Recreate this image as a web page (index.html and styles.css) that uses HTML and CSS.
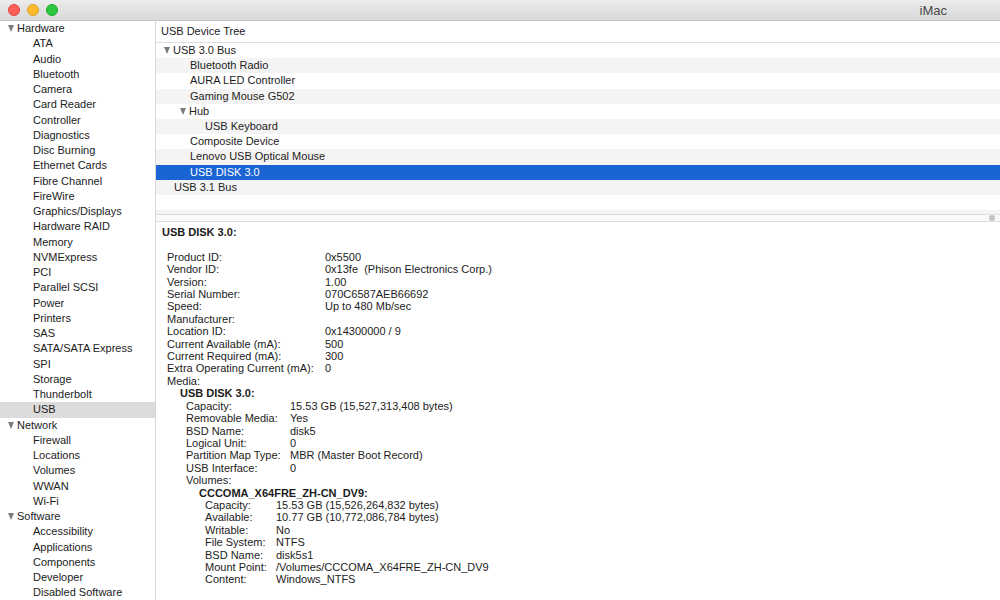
FILE: index.html
```html
<!DOCTYPE html>
<html lang="en">
<head>
    <meta charset="UTF-8">
    <title>System Information</title>
    <link rel="stylesheet" href="styles.css">
</head>
<body>

<div class="window">
    <div class="titlebar">
        <div class="lights">
            <span class="light red"></span>
            <span class="light yellow"></span>
            <span class="light green"></span>
        </div>
        <div class="title">iMac</div>
    </div>

    <div class="main">
        <ul class="sidebar">
            <li class="group"><span class="tri"></span>Hardware</li>
            <li>ATA</li>
            <li>Audio</li>
            <li>Bluetooth</li>
            <li>Camera</li>
            <li>Card Reader</li>
            <li>Controller</li>
            <li>Diagnostics</li>
            <li>Disc Burning</li>
            <li>Ethernet Cards</li>
            <li>Fibre Channel</li>
            <li>FireWire</li>
            <li>Graphics/Displays</li>
            <li>Hardware RAID</li>
            <li>Memory</li>
            <li>NVMExpress</li>
            <li>PCI</li>
            <li>Parallel SCSI</li>
            <li>Power</li>
            <li>Printers</li>
            <li>SAS</li>
            <li>SATA/SATA Express</li>
            <li>SPI</li>
            <li>Storage</li>
            <li>Thunderbolt</li>
            <li class="current">USB</li>
            <li class="group"><span class="tri"></span>Network</li>
            <li>Firewall</li>
            <li>Locations</li>
            <li>Volumes</li>
            <li>WWAN</li>
            <li>Wi-Fi</li>
            <li class="group"><span class="tri"></span>Software</li>
            <li>Accessibility</li>
            <li>Applications</li>
            <li>Components</li>
            <li>Developer</li>
            <li>Disabled Software</li>
        </ul>

        <div class="content">
            <div class="tree-head">USB Device Tree</div>
            <ul class="tree">
                <li class="lv0"><span class="tri"></span>USB 3.0 Bus</li>
                <li class="lv1">Bluetooth Radio</li>
                <li class="lv1">AURA LED Controller</li>
                <li class="lv1">Gaming Mouse G502</li>
                <li class="lv1 open"><span class="tri"></span>Hub</li>
                <li class="lv2">USB Keyboard</li>
                <li class="lv1">Composite Device</li>
                <li class="lv1">Lenovo USB Optical Mouse</li>
                <li class="lv1 selected">USB DISK 3.0</li>
                <li class="lv0">USB 3.1 Bus</li>
                <li></li>
                <li class="cut"></li>
            </ul>

            <div class="splitter"><span class="grip"></span></div>

            <div class="detail">
                <div class="heading">USB DISK 3.0:</div>
                <div class="blank"></div>

                <div class="props level1">
                    <span>Product ID:</span><span>0x5500</span>
                    <span>Vendor ID:</span><span>0x13fe&nbsp; (Phison Electronics Corp.)</span>
                    <span>Version:</span><span>1.00</span>
                    <span>Serial Number:</span><span>070C6587AEB66692</span>
                    <span>Speed:</span><span>Up to 480 Mb/sec</span>
                    <span>Manufacturer:</span><span></span>
                    <span>Location ID:</span><span>0x14300000 / 9</span>
                    <span>Current Available (mA):</span><span>500</span>
                    <span>Current Required (mA):</span><span>300</span>
                    <span>Extra Operating Current (mA):</span><span>0</span>
                    <span>Media:</span><span></span>
                </div>

                <div class="heading sub1">USB DISK 3.0:</div>
                <div class="props level2">
                    <span>Capacity:</span><span>15.53 GB (15,527,313,408 bytes)</span>
                    <span>Removable Media:</span><span>Yes</span>
                    <span>BSD Name:</span><span>disk5</span>
                    <span>Logical Unit:</span><span>0</span>
                    <span>Partition Map Type:</span><span>MBR (Master Boot Record)</span>
                    <span>USB Interface:</span><span>0</span>
                    <span>Volumes:</span><span></span>
                </div>

                <div class="heading sub2">CCCOMA_X64FRE_ZH-CN_DV9:</div>
                <div class="props level3">
                    <span>Capacity:</span><span>15.53 GB (15,526,264,832 bytes)</span>
                    <span>Available:</span><span>10.77 GB (10,772,086,784 bytes)</span>
                    <span>Writable:</span><span>No</span>
                    <span>File System:</span><span>NTFS</span>
                    <span>BSD Name:</span><span>disk5s1</span>
                    <span>Mount Point:</span><span>/Volumes/CCCOMA_X64FRE_ZH-CN_DV9</span>
                    <span>Content:</span><span>Windows_NTFS</span>
                </div>
            </div>
        </div>
    </div>
</div>

</body>
</html>
```

FILE: styles.css
```css
* {
    margin: 0;
    padding: 0;
    box-sizing: border-box;
}
body {
    font-family: 'Helvetica Neue', 'Liberation Sans', Arial, sans-serif;
    font-size: 11px;
    color: #1c1c1c;
    background-color: #fff;
    width: 1000px;
    height: 600px;
    overflow: hidden;
}
ul {
    list-style: none;
}
.window {
    display: flex;
    flex-direction: column;
    height: 600px;
}

/* title bar */
.titlebar {
    height: 21px;
    flex: none;
    display: flex;
    align-items: center;
    justify-content: space-between;
    padding: 0 53px 0 8px;
    background: linear-gradient(#ececec, #d8d8d8);
    border-bottom: 1px solid #c4c4c4;
}
.lights {
    display: flex;
    gap: 7px;
    margin-top: -1px;
}
.light {
    width: 12px;
    height: 12px;
    border-radius: 50%;
}
.red { background-color: #fc5f57; border: 1px solid #e0443e; }
.yellow { background-color: #fdbc2e; border: 1px solid #dea123; }
.green { background-color: #2ec840; border: 1px solid #1aab29; }
.title {
    font-size: 13px;
    color: #4a4a4a;
}

.main {
    flex: 1;
    display: flex;
    min-height: 0;
}

/* sidebar */
.sidebar {
    width: 156px;
    flex: none;
    border-right: 1px solid #d6d6d6;
    overflow: hidden;
}
.sidebar li {
    height: 15.25px;
    line-height: 15.25px;
    padding-left: 33px;
    white-space: nowrap;
}
.sidebar li.group {
    padding-left: 8px;
    display: flex;
    align-items: center;
}
.sidebar li.current {
    background-color: #dcdcdc;
}
.tri {
    display: inline-block;
    width: 0;
    height: 0;
    border-left: 3.5px solid transparent;
    border-right: 3.5px solid transparent;
    border-top: 7px solid #7b7b7b;
    margin-right: 3px;
}

/* right side */
.content {
    flex: 1;
    display: flex;
    flex-direction: column;
    min-width: 0;
}
.tree-head {
    height: 22px;
    line-height: 21px;
    padding-left: 5px;
    border-bottom: 1px solid #dedede;
    flex: none;
}
.tree {
    height: 171px;
    overflow: hidden;
    flex: none;
}
.tree li {
    height: 15.2px;
    line-height: 15.2px;
    white-space: nowrap;
}
.tree li:nth-child(even) {
    background-color: #f4f4f4;
}
.tree li.lv0 { padding-left: 18px; }
.tree li.lv1 { padding-left: 34px; }
.tree li.lv2 { padding-left: 49px; }
.tree li.lv0 .tri { margin-left: -10px; }
.tree li.lv1 .tri { margin-left: -10px; }
.tree li.selected {
    background-color: #1a63d2;
    color: #fff;
}
.tree li.cut {
    height: 4px;
}

.splitter {
    height: 8px;
    flex: none;
    border-top: 1px solid #dcdcdc;
    border-bottom: 1px solid #dcdcdc;
    background-color: #fafafa;
    display: flex;
    justify-content: flex-end;
    align-items: center;
    padding-right: 5px;
}
.grip {
    width: 6px;
    height: 6px;
    border-radius: 50%;
    background-color: #c4c4c4;
}

/* detail */
.detail {
    padding: 4px 0 0 6px;
    line-height: 12.42px;
    overflow: hidden;
}
.heading {
    font-weight: bold;
    height: 12.42px;
}
.blank {
    height: 12.42px;
}
.props {
    display: grid;
    white-space: nowrap;
}
.props span {
    height: 12.42px;
}
.level1 {
    margin-left: 5px;
    grid-template-columns: 158px auto;
}
.heading.sub1 {
    margin-left: 18px;
}
.level2 {
    margin-left: 24px;
    grid-template-columns: 104px auto;
}
.heading.sub2 {
    margin-left: 37px;
}
.level3 {
    margin-left: 43px;
    grid-template-columns: 71px auto;
}
```
